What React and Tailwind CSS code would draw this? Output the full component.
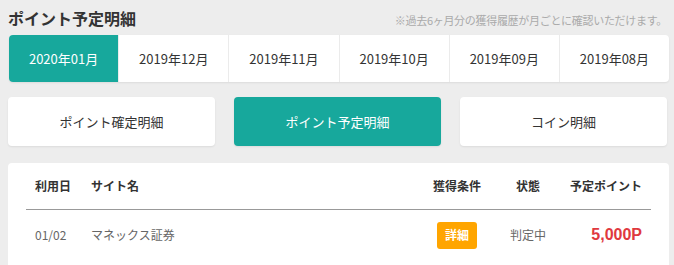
const months = ['2020年01月', '2019年12月', '2019年11月', '2019年10月', '2019年09月', '2019年08月']
const kinds = ['ポイント確定明細', 'ポイント予定明細', 'コイン明細']

export default function App() {
  const active = 0
  const activeKind = 1

  return (
    <div className="min-h-[265px] bg-[#ededed] pl-2 pt-[6px] font-['Noto_Sans_CJK_JP','Noto_Sans',sans-serif] text-[#333]">
      <div className="w-[661px]">
        {/* Heading */}
        <div className="flex items-end justify-between h-[22px]">
          <h1 className="text-[16px] font-bold leading-[20px] text-[#333]">ポイント予定明細</h1>
          <p className="text-[11px] leading-[16px] text-[#aaa] pr-[2px] tracking-[-0.3px]">※過去6ヶ月分の獲得履歴が月ごとに確認いただけます。</p>
        </div>

        {/* Month tabs */}
        <div className="mt-[7px] ml-px flex h-[47px] rounded-[4px] bg-white shadow-[0_1px_2px_rgba(0,0,0,0.08)] overflow-hidden">
          {months.map((m, i) => (
            <button
              key={m}
              className={`flex-1 flex items-center justify-center text-[13px] ${
                i === active ? 'bg-[#17a89c] text-white' : 'text-[#333]'
              } ${i > 0 ? 'border-l border-[#ebebeb]' : ''}`}
            >
              {m}
            </button>
          ))}
        </div>

        {/* Kind buttons */}
        <div className="mt-[15px] flex gap-[19px]">
          {kinds.map((k, i) => (
            <button
              key={k}
              className={`w-[207px] h-[49px] rounded-[4px] text-[13px] flex items-center justify-center shadow-[0_1px_2px_rgba(0,0,0,0.08)] ${
                i === activeKind ? 'bg-[#17a89c] text-white' : 'bg-white text-[#333]'
              }`}
            >
              {k}
            </button>
          ))}
        </div>

        {/* Table */}
        <div className="mt-[17px] bg-white rounded-t-[4px] px-[18px] h-[110px]">
          <div className="flex h-[47px] items-center border-b border-[#999] text-[12px] font-bold text-[#333]">
            <div className="w-[56px] pl-[9px]">利用日</div>
            <div className="flex-1 pl-[9px]">サイト名</div>
            <div className="w-[74px] text-center">獲得条件</div>
            <div className="w-[68px] text-center">状態</div>
            <div className="w-[89px] text-right pr-[9px]">予定ポイント</div>
          </div>
          <div className="flex h-[50px] items-center text-[12px] text-[#666]">
            <div className="w-[56px] pl-[9px]">01/02</div>
            <div className="flex-1 pl-[9px]">マネックス証券</div>
            <div className="w-[74px] flex justify-center">
              <span className="w-[40px] h-[27px] rounded-[3px] bg-[#ffa500] text-white font-bold text-[12px] flex items-center justify-center">詳細</span>
            </div>
            <div className="w-[68px] text-center">判定中</div>
            <div className="w-[89px] text-right pr-[9px] text-[16px] font-bold text-[#e0393e] font-['Liberation_Sans',sans-serif]">5,000P</div>
          </div>
        </div>
      </div>
    </div>
  )
}
